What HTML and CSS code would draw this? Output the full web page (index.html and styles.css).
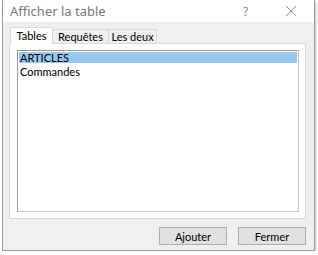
FILE: index.html
```html
<!DOCTYPE html>
<html lang="fr">
  <head>
    <meta charset="UTF-8" />
    <title>Afficher la table</title>
    <link rel="stylesheet" href="styles.css">
  </head>
  <body>
    <div class="window">
      <div class="titlebar">
        <span class="title">Afficher la table</span>
        <span class="help">?</span>
        <span class="close">
          <svg width="12" height="12" viewBox="0 0 12 12">
            <path d="M1 1 L11 11 M11 1 L1 11" stroke="#8a8a8a" stroke-width="1" fill="none" />
          </svg>
        </span>
      </div>
      <div class="content">
        <div class="tabs">
          <div class="tab active tab-tables">Tables</div>
          <div class="tab tab-queries">Requêtes</div>
          <div class="tab tab-both">Les deux</div>
        </div>
        <div class="panel">
          <ul class="listbox">
            <li class="selected">ARTICLES</li>
            <li>Commandes</li>
          </ul>
        </div>
        <div class="buttons">
          <button>Ajouter</button>
          <button>Fermer</button>
        </div>
      </div>
    </div>
  </body>
</html>
```

FILE: styles.css
```css
/* Access-style dialog */
body {
  margin: 0;
  background: #fff;
  font-family: Lato, "Noto Sans", sans-serif;
  font-size: 11px;
  color: #000;
}
.window {
  margin-left: 2px;
  width: 311px;
  height: 250px;
  border: 1px solid #9a9a9a;
  border-top: none;
  box-shadow: 1px 1px 2px rgba(0, 0, 0, 0.25);
  display: flex;
  flex-direction: column;
}
.titlebar {
  height: 22px;
  background: #fff;
  display: flex;
  align-items: center;
}
.title {
  flex: 1;
  padding-left: 7px;
  font-family: "Noto Sans", sans-serif;
  font-size: 13px;
  color: #7a7a7a;
}
.help {
  width: 20px;
  color: #8a8a8a;
  font-family: "Noto Sans", sans-serif;
  font-size: 12px;
  margin-right: 22px;
}
.close {
  width: 12px;
  margin-right: 17px;
  display: flex;
}
.content {
  flex: 1;
  background: #f0f0f0;
  padding: 5px 8px 0 6px;
  display: flex;
  flex-direction: column;
}
.tabs {
  display: flex;
  padding-left: 1px;
  height: 16px;
  align-items: flex-end;
}
.tab {
  height: 13px;
  line-height: 13px;
  text-align: center;
  background: #f0f0f0;
  border: 1px solid #d9d9d9;
  border-bottom: none;
  margin-right: -1px;
  font-size: 11px;
}
.tab.active {
  height: 16px;
  line-height: 16px;
  background: #fff;
  position: relative;
  z-index: 1;
  margin-bottom: -1px;
}
.tab-tables {
  width: 41px;
}
.tab-queries {
  width: 55px;
}
.tab-both {
  width: 47px;
}
.panel {
  background: #fff;
  border: 1px solid #d9d9d9;
  height: 176px;
  padding: 6px 6px 6px 7px;
  box-sizing: border-box;
}
.listbox {
  list-style: none;
  margin: 0;
  padding: 1px;
  height: 100%;
  box-sizing: border-box;
  border: 1px solid #9a9a9a;
  border-right-color: #c8c8c8;
  border-bottom-color: #c8c8c8;
}
.listbox li {
  height: 13px;
  line-height: 13px;
  padding-left: 1px;
  font-size: 11px;
}
.listbox li.selected {
  height: 11px;
  line-height: 11px;
  margin-bottom: 2px;
  background: #99c9ef;
}
.buttons {
  display: flex;
  justify-content: flex-end;
  gap: 11px;
  margin-top: 8px;
}
.buttons button {
  width: 68px;
  height: 18px;
  padding: 0;
  background: #e1e1e1;
  border: 1px solid #adadad;
  font-family: inherit;
  font-size: 11px;
  color: #000;
}
```
